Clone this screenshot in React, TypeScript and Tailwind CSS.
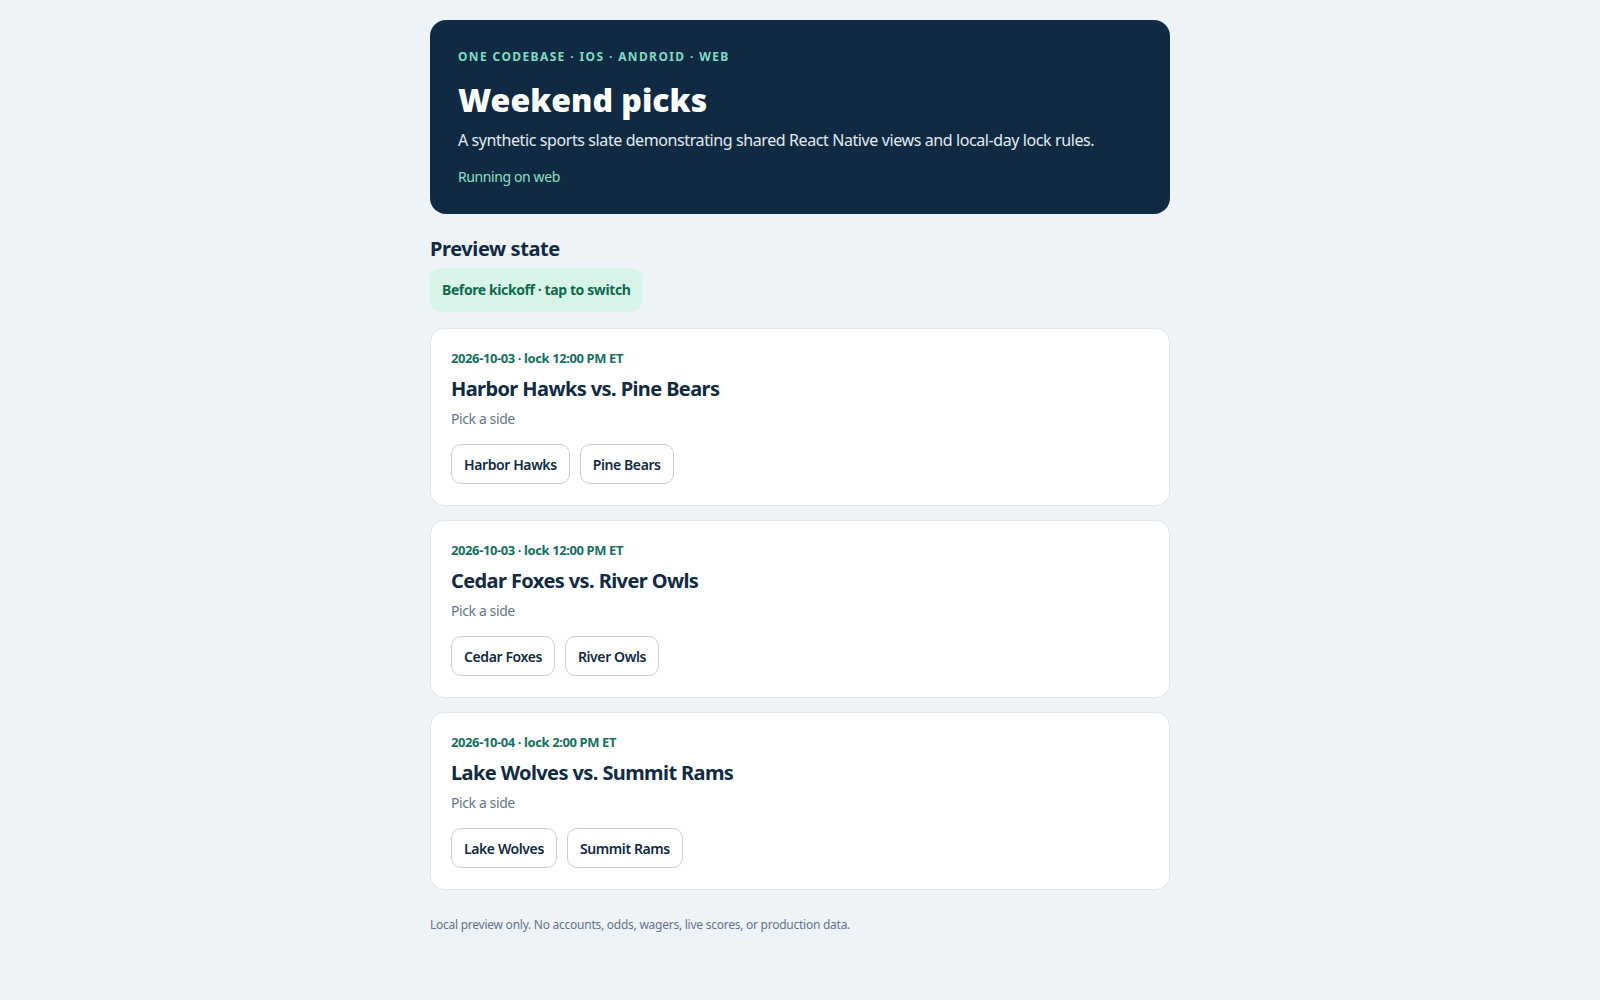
import React, { useState } from 'react';

type Game = {
  id: string;
  date: string;
  lock: string;
  home: string;
  away: string;
};

const GAMES: Game[] = [
  { id: 'g1', date: '2026-10-03', lock: '12:00 PM ET', home: 'Harbor Hawks', away: 'Pine Bears' },
  { id: 'g2', date: '2026-10-03', lock: '12:00 PM ET', home: 'Cedar Foxes', away: 'River Owls' },
  { id: 'g3', date: '2026-10-04', lock: '2:00 PM ET', home: 'Lake Wolves', away: 'Summit Rams' },
];

const GameCard: React.FC<{ game: Game; locked: boolean }> = ({ game, locked }) => {
  const [pick, setPick] = useState<string | null>(null);

  return (
    <div className="bg-white border border-[#dde4ec] rounded-[14px] px-5 pt-5 pb-[21px]">
      <p className="text-[13px] leading-[18px] font-bold text-[#17705f]">
        {game.date} · lock {game.lock}
      </p>
      <h3 className="mt-2 text-[20px] leading-[28px] font-bold tracking-[-0.03em] text-[#102a43]">
        {game.home} vs. {game.away}
      </h3>
      <p className="mt-1.5 text-[14px] leading-[20px] text-[#64748b]">
        {locked ? 'Picks are locked' : pick ? `Your pick: ${pick}` : 'Pick a side'}
      </p>
      <div className="mt-[15px] flex gap-2.5">
        {[game.home, game.away].map(team => (
          <button
            key={team}
            disabled={locked}
            onClick={() => setPick(team)}
            className={
              pick === team
                ? 'h-10 px-3 rounded-[10px] border border-[#17705f] bg-[#d9f5ea] text-[14px] font-semibold text-[#102a43]'
                : 'h-10 px-3 rounded-[10px] border border-[#c5ced8] bg-white text-[14px] font-semibold text-[#102a43]'
            }
          >
            {team}
          </button>
        ))}
      </div>
    </div>
  );
};

export default function App() {
  const [locked, setLocked] = useState(false);

  return (
    <div className="min-h-screen bg-[#eef3f8] font-['Noto_Sans',sans-serif] tracking-[-0.025em]">
      <div className="max-w-[740px] mx-auto pt-5 pb-16">
        <header className="bg-[#102a43] rounded-[16px] px-7 pt-7 pb-[27px]">
          <p className="text-[12px] leading-[18px] font-bold tracking-[0.115em] uppercase text-[#7fdcc4]">
            One codebase · iOS · Android · Web
          </p>
          <h1 className="mt-[14px] text-[32px] leading-[40px] font-black tracking-normal text-white">Weekend picks</h1>
          <p className="mt-2 text-[16px] leading-[24px] text-[#e3eaf2]">
            A synthetic sports slate demonstrating shared React Native views and local-day lock rules.
          </p>
          <p className="mt-[15px] text-[14px] leading-[20px] text-[#8be0c5]">Running on web</p>
        </header>

        <h2 className="mt-[23px] text-[20px] leading-6 font-bold text-[#102a43]">Preview state</h2>
        <button
          onClick={() => setLocked(l => !l)}
          className="mt-[7px] px-3 py-3 rounded-[10px] bg-[#d8f4e9] text-[14px] leading-[20px] font-bold text-[#0d6a4c]"
        >
          {locked ? 'After kickoff' : 'Before kickoff'} · tap to switch
        </button>

        <div className="mt-4 flex flex-col gap-[14px]">
          {GAMES.map(g => (
            <GameCard key={g.id} game={g} locked={locked} />
          ))}
        </div>

        <p className="mt-[26px] text-[12px] leading-[18px] tracking-[-0.021em] text-[#64748b]">
          Local preview only. No accounts, odds, wagers, live scores, or production data.
        </p>
      </div>
    </div>
  );
}
